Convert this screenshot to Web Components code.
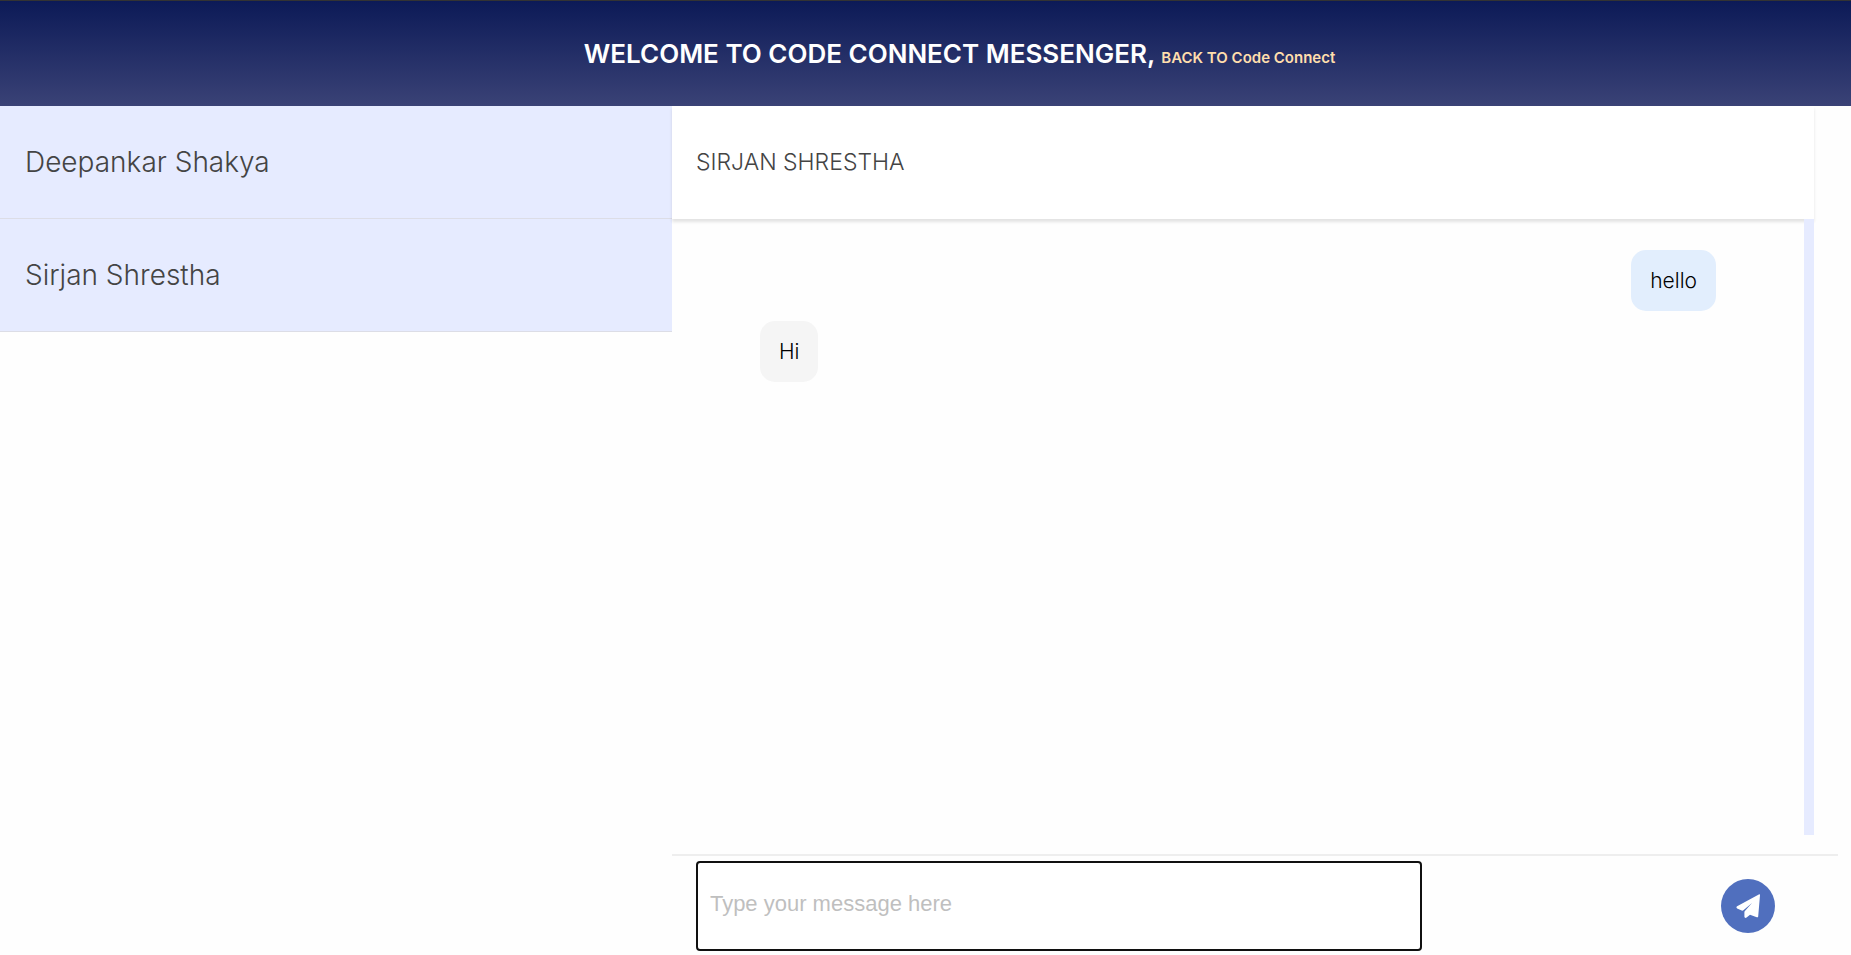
<!DOCTYPE html>
<html lang="en">
<head>
<meta charset="utf-8">
<meta name="viewport" content="width=device-width, initial-scale=1">
<title>Code Connect Messenger</title>
<style>
  body { margin: 0; background: #fefefe; font-family: Inter, "Open Sans", sans-serif; }
</style>
</head>
<body>
<messenger-app>
  <app-banner slot="banner" href="#home" link="BACK TO Code Connect">WELCOME TO CODE CONNECT MESSENGER,</app-banner>
  <contact-item slot="contacts">Deepankar Shakya</contact-item>
  <contact-item slot="contacts">Sirjan Shrestha</contact-item>
  <chat-panel name="SIRJAN SHRESTHA">
    <chat-bubble sent>hello</chat-bubble>
    <chat-bubble>Hi</chat-bubble>
  </chat-panel>
  <message-form slot="form"></message-form>
</messenger-app>

<script>
const define = (name, html, setup) => {
  const template = document.createElement('template');
  template.innerHTML = html;
  customElements.define(name, class extends HTMLElement {
    constructor() {
      super();
      this.attachShadow({ mode: 'open' }).append(template.content.cloneNode(true));
    }
    connectedCallback() { if (setup) setup(this, this.shadowRoot); }
  });
};

define('messenger-app', `
  <style>
    :host { display: flex; flex-direction: column; min-height: 100vh; }
    .body { flex: 1; display: grid; grid-template-columns: 363fr 637fr; }
    main { display: flex; flex-direction: column; min-width: 0; }
  </style>
  <slot name="banner"></slot>
  <div class="body">
    <nav aria-label="Contacts"><slot name="contacts"></slot></nav>
    <main><slot></slot><slot name="form"></slot></main>
  </div>`);

define('app-banner', `
  <style>
    :host { display: block; border-top: 1px solid #333; background: linear-gradient(#0c1a57, #3a4276); }
    h1 {
      margin: 0; padding: 36px 0 35px 68px; text-align: center;
      font-size: 26px; line-height: 34px; font-weight: 600; color: #fff;
    }
    a { font-size: 15px; line-height: 16px; color: #ffdead; text-decoration: none; }
  </style>
  <header><h1><slot></slot> <a></a></h1></header>`,
  (host, root) => {
    const a = root.querySelector('a');
    a.href = host.getAttribute('href');
    a.textContent = host.getAttribute('link');
  });

define('contact-item', `
  <style>
    :host { display: block; border-bottom: 1px solid #dcdde6; background: #e6ebff; }
    button {
      display: block; width: 100%; padding: 38px 25px; border: 0; background: none;
      font: 300 28px/36px Inter, "Open Sans", sans-serif; color: #444; text-align: left; cursor: pointer;
    }
  </style>
  <button type="button"><slot></slot></button>`);

define('chat-panel', `
  <style>
    :host { flex: 1; display: flex; flex-direction: column; margin: 0 37px 19px 0; }
    header { background: #fff; box-shadow: 0 3px 3px rgba(0, 0, 0, .11); }
    h2 { margin: 0; padding: 38px 24px 39px; font-size: 23px; line-height: 36px; font-weight: 300; color: #444; }
    .messages {
      position: relative; flex: 1; display: flex; flex-direction: column; gap: 10px;
      padding: 31px 88px; border-right: 10px solid #e6ebff;
    }
  </style>
  <header><h2></h2></header>
  <div class="messages" role="log"><slot></slot></div>`,
  (host, root) => { root.querySelector('h2').textContent = host.getAttribute('name'); });

define('chat-bubble', `
  <style>
    :host {
      display: block; align-self: flex-start; padding: 16px 19px; border-radius: 15px;
      background: #f5f5f5; color: #000; font-size: 21px; line-height: 29px; font-weight: 300;
    }
    :host([sent]) { align-self: flex-end; background: #e2eefd; }
  </style>
  <slot></slot>`);

define('message-form', `
  <style>
    :host { display: block; margin-right: 13px; border-top: 2px solid #eee; }
    form { display: flex; align-items: center; justify-content: space-between; padding: 5px 63px 4px 24px; }
    label { flex: 0 1 726px; }
    input {
      display: block; box-sizing: border-box; width: 100%; height: 90px; padding: 0 12px 4px;
      border: 2px solid #101010; border-radius: 4px; outline: 0; background: #fff;
      font: 22px/30px "Liberation Sans", Arial, sans-serif; color: #222;
    }
    input::placeholder { color: #bfbfbf; opacity: 1; }
    button {
      display: flex; align-items: center; justify-content: center; width: 54px; height: 54px;
      padding: 0; border: 0; border-radius: 50%; background: #506fbe; color: #fff; cursor: pointer;
    }
    svg { width: 24px; height: 24px; }
  </style>
  <form onsubmit="return false">
    <label><input type="text" name="message" aria-label="Message" placeholder="Type your message here"></label>
    <button type="submit" aria-label="Send">
      <svg viewBox="0 0 24 24" fill="currentColor" aria-hidden="true"><path d="M22.8.4c.8-.4 1.3 0 1.2.8L22.2 22.4q-.2 1.2-1.4.9L14 20.7l-3.4 2.9q-2 .9-2.2-.8v-4.6q0-.7.5-1.2L16 9 7.4 16.3q-.8.7-1.7.3L1.1 14.4q-1.4-1.1 0-2.1z"/></svg>
    </button>
  </form>`);
</script>
</body>
</html>
